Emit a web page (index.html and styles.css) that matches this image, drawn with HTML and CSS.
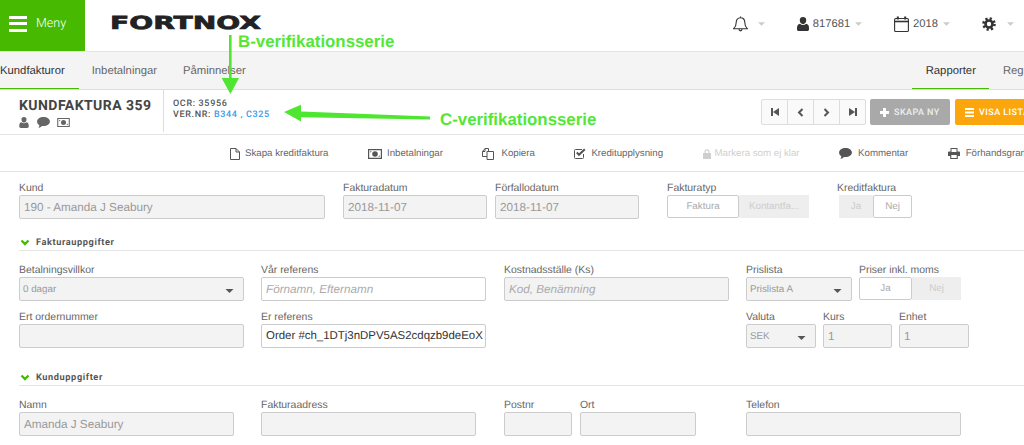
FILE: index.html
```html
<!DOCTYPE html>
<html lang="sv">
<head>
<meta charset="utf-8">
<title>Kundfaktura 359</title>
<link rel="stylesheet" href="styles.css">
</head>
<body>
<svg class="defs" width="0" height="0">
  <symbol id="i-user" viewBox="0 0 12 14"><path d="M6 0a3.3 3.3 0 0 1 3.2 3.6c0 2-1.4 3.6-3.2 3.6S2.800 5.600 2.800 3.600A3.300 3.300 0 0 1 6 0zM3 6.800c.8.8 1.800 1.200 3 1.200s2.200-.4 3-1.200c2 .3 3 1.700 3 4v1.400c0 1-.7 1.800-1.700 1.800H1.700C.7 14 0 13.200 0 12.200v-1.400c0-2.300 1-3.700 3-4z"/></symbol>
  <symbol id="i-comment" viewBox="0 0 14 12"><path d="M7 0c3.900 0 7 2.100 7 4.900s-3.100 4.900-7 4.900c-.6 0-1.100 0-1.600-.1C4.300 10.800 2.900 11.600 1.400 12c.6-.9 1-1.800 1.100-3C1 8.100 0 6.600 0 4.900 0 2.100 3.100 0 7 0z"/></symbol>
  <symbol id="i-money" viewBox="0 0 14 10"><path fill-rule="evenodd" d="M0 0h14v10H0zM1.200 1.200v7.600h11.600V1.200zM7 2.200a2.800 2.800 0 1 1 0 5.600 2.800 2.800 0 0 1 0-5.600zM2.200 2.200h1.600L2.200 3.800zM11.800 7.800h-1.600l1.600-1.600z"/></symbol>
  <symbol id="i-caret" viewBox="0 0 10 5"><path d="M0 0h10L5 5z"/></symbol>
  <symbol id="i-chev" viewBox="0 0 10 7"><path d="M1.500 1.500 5 5l3.500-3.500" fill="none" stroke="#46b900" stroke-width="2.400"/></symbol>
</svg>

<header class="topbar">
  <a class="menu-btn">
    <span class="burger"><i></i><i></i><i></i></span>
    <span>Meny</span>
  </a>
  <svg class="logo" width="152" height="16" viewBox="0 0 152 16"><text x="0" y="14" textLength="151" lengthAdjust="spacingAndGlyphs">FORTNOX</text></svg>
  <div class="top-tools">
    <div class="tool tool-bell">
      <svg width="15" height="16" viewBox="0 0 15 16" fill="none" stroke="#333" stroke-width="1.100"><path d="M7.500 1.800c-2.700 0-4.300 2-4.300 4.600 0 3.400-.9 4.800-2.500 6.300h13.600c-1.600-1.500-2.500-2.900-2.500-6.300 0-2.600-1.600-4.600-4.300-4.600zM6 13c0 1 .6 1.900 1.500 1.900S9 14 9 13M7.500 1.800V.6"/></svg>
      <svg class="caret" width="7" height="4"><use href="#i-caret"/></svg>
    </div>
    <div class="tool tool-user">
      <svg class="dark" width="12" height="14"><use href="#i-user"/></svg>
      <span>817681</span>
      <svg class="caret" width="7" height="4"><use href="#i-caret"/></svg>
    </div>
    <div class="tool tool-year">
      <svg width="15" height="16" viewBox="0 0 15 16" fill="none" stroke="#333" stroke-width="1.100"><rect x=".6" y="2.500" width="13.800" height="13" rx="1"/><path d="M.6 5.500h13.800" stroke-width="1.600"/><path d="M3.800.5v3M11.200.5v3" stroke-width="2"/></svg>
      <span>2018</span>
      <svg class="caret" width="7" height="4"><use href="#i-caret"/></svg>
    </div>
    <div class="tool">
      <svg width="14" height="14" viewBox="0 0 14 14" fill="none" stroke="#333"><circle cx="7" cy="7" r="3.500" stroke-width="2.600"/><circle cx="7" cy="7" r="5.500" stroke-width="2.600" stroke-dasharray="2.200 2.120"/></svg>
      <svg class="caret" width="7" height="4"><use href="#i-caret"/></svg>
    </div>
  </div>
</header>

<nav class="subnav">
  <div class="tabs">
    <a class="tab tab-active tab-first">Kundfakturor</a>
    <a class="tab">Inbetalningar</a>
    <a class="tab">Påminnelser</a>
  </div>
  <div class="tabs tabs-right">
    <a class="tab tab-active">Rapporter</a>
    <a class="tab">Register</a>
  </div>
</nav>

<section class="titlebar">
  <div class="title-block">
    <h1>KUNDFAKTURA 359</h1>
    <div class="title-icons">
      <svg width="10" height="11"><use href="#i-user"/></svg>
      <svg width="13" height="11"><use href="#i-comment"/></svg>
      <svg width="13" height="9"><use href="#i-money"/></svg>
    </div>
  </div>
  <div class="meta">
    <div>OCR: 35956</div>
    <div>VER.NR: <a>B344 , C325</a></div>
  </div>
  <div class="title-actions">
    <div class="pager">
      <span class="pg"><svg width="8" height="8" viewBox="0 0 8 8"><path d="M0 0h2v8H0zM8 0v8L2 4z"/></svg></span>
      <span class="pg"><svg width="7" height="9" viewBox="0 0 7 9"><path d="M5.500 1 2 4.500 5.500 8" fill="none" stroke="#555" stroke-width="2"/></svg></span>
      <span class="pg"><svg width="7" height="9" viewBox="0 0 7 9"><path d="M1.500 1 5 4.500 1.500 8" fill="none" stroke="#555" stroke-width="2"/></svg></span>
      <span class="pg"><svg width="8" height="8" viewBox="0 0 8 8"><path d="M8 0H6v8h2zM0 0v8l6-4z"/></svg></span>
    </div>
    <a class="btn btn-gray"><svg width="9" height="9" viewBox="0 0 9 9"><path d="M3 0h3v3h3v3H6v3H3V6H0V3h3z"/></svg>SKAPA NY</a>
    <a class="btn btn-orange"><svg width="9" height="9" viewBox="0 0 9 9"><path d="M0 0h9v2H0zM0 3.500h9v2H0zM0 7h9v2H0z"/></svg>VISA LISTA</a>
  </div>
</section>

<div class="actions">
  <a class="action">
    <svg width="10" height="12" viewBox="0 0 10 12" fill="none" stroke="#555"><path d="M.5.5h5.500l3.500 3.500v7.500h-9zM6 .5V4h3.500"/></svg>Skapa kreditfaktura</a>
  <a class="action">
    <svg width="14" height="10"><use href="#i-money"/></svg>Inbetalningar</a>
  <a class="action">
    <svg width="12" height="12" viewBox="0 0 12 12" fill="none" stroke="#555"><path d="M5 8.500H.5V3.500L3 .5h3.500v2.500M5 3.500h6.500v8H5zM3 .5v3H.5"/></svg>Kopiera</a>
  <a class="action">
    <svg width="12" height="11" viewBox="0 0 12 11" fill="none" stroke="#555"><path d="M9.500 6v3.500a1 1 0 0 1-1 1h-7a1 1 0 0 1-1-1v-7a1 1 0 0 1 1-1H8"/><path d="M2.800 4.500 5 6.800 10.800 1.200" stroke-width="2"/></svg>Kreditupplysning</a>
  <a class="action action-off">
    <svg width="8" height="10" viewBox="0 0 8 10"><path d="M1.500 4V2.800a2.500 2.500 0 0 1 5 0V4H8v6H0V4zM2.700 4h2.600V2.800a1.300 1.300 0 0 0-2.600 0z"/></svg>Markera som ej klar</a>
  <a class="action">
    <svg width="13" height="11"><use href="#i-comment"/></svg>Kommentar</a>
  <a class="action">
    <svg width="12" height="11" viewBox="0 0 12 11"><path fill-rule="evenodd" d="M2.500 0h7v3.500H11a1 1 0 0 1 1 1V8H9.800v3H2.200V8H0V4.500a1 1 0 0 1 1-1h1.500zM3.500 1v3h5V1zM3.300 7v3h5.400V7z"/></svg>Förhandsgranska</a>
</div>

<main class="form">
  <div class="row row-1">
    <div class="field w-kund"><label>Kund</label><div class="input off">190 - Amanda J Seabury</div></div>
    <div class="field w-date"><label>Fakturadatum</label><div class="input off">2018-11-07</div></div>
    <div class="field w-date2"><label>Förfallodatum</label><div class="input off">2018-11-07</div></div>
    <div class="field w-ftyp"><label>Fakturatyp</label>
      <div class="seg"><span class="seg-on s-faktura">Faktura</span><span class="seg-off s-kontant">Kontantfa...</span></div></div>
    <div class="field w-kredit"><label>Kreditfaktura</label>
      <div class="seg seg-in"><span class="seg-off s-ja">Ja</span><span class="seg-on s-nej">Nej</span></div></div>
  </div>

  <div class="section sec-1"><svg width="10" height="7"><use href="#i-chev"/></svg><span>Fakturauppgifter</span></div>

  <div class="row row-2">
    <div class="field w-bet"><label>Betalningsvillkor</label><div class="input off select small">0 dagar<svg width="9" height="4"><use href="#i-caret"/></svg></div></div>
    <div class="field w-ref"><label>Vår referens</label><div class="input on ph">Förnamn, Efternamn</div></div>
    <div class="field w-kst"><label>Kostnadsställe (Ks)</label><div class="input off ph">Kod, Benämning</div></div>
    <div class="field w-pris"><label>Prislista</label><div class="input off select small">Prislista A<svg width="9" height="4"><use href="#i-caret"/></svg></div></div>
    <div class="field w-moms"><label>Priser inkl. moms</label>
      <div class="seg"><span class="seg-on s-ja2">Ja</span><span class="seg-off s-nej2">Nej</span></div></div>
  </div>

  <div class="row row-3">
    <div class="field w-bet"><label>Ert ordernummer</label><div class="input off"></div></div>
    <div class="field w-er"><label>Er referens</label><div class="input on dark-text">Order #ch_1DTj3nDPV5AS2cdqzb9deEoX</div></div>
    <div class="field w-val"><label>Valuta</label><div class="input off select small">SEK<svg width="9" height="4"><use href="#i-caret"/></svg></div></div>
    <div class="field w-kurs"><label>Kurs</label><div class="input off">1</div></div>
    <div class="field w-kurs2"><label>Enhet</label><div class="input off">1</div></div>
  </div>

  <div class="section sec-2"><svg width="10" height="7"><use href="#i-chev"/></svg><span>Kunduppgifter</span></div>

  <div class="row row-4">
    <div class="field w-namn"><label>Namn</label><div class="input off">Amanda J Seabury</div></div>
    <div class="field w-adr"><label>Fakturaadress</label><div class="input off"></div></div>
    <div class="field w-post"><label>Postnr</label><div class="input off"></div></div>
    <div class="field w-ort"><label>Ort</label><div class="input off"></div></div>
    <div class="field w-tel"><label>Telefon</label><div class="input off"></div></div>
  </div>
</main>

<svg class="arrows" width="1024" height="445" viewBox="0 0 1024 445">
  <path d="M229 35h2.600v43h7.400l-8.600 16-8.800-16h7.400z"/>
  <path d="M284 112 301 104.800v6.600L430 116.600v2.800L301 117.200v4.400z"/>
</svg>
<div class="note note-b">B-verifikationsserie</div>
<div class="note note-c">C-verifikationsserie</div>
</body>
</html>
```
FILE: styles.css
```css
* { box-sizing: border-box; }
html, body { margin: 0; padding: 0; width: 1024px; height: 445px; overflow: hidden; }
body { position: relative; background: #fff; font-family: "Liberation Sans", Arial, sans-serif; color: #666; text-rendering: geometricPrecision; }
.defs { position: absolute; }
a { text-decoration: none; }

/* top bar */
.topbar { height: 52px; display: flex; align-items: flex-start; border-bottom: 1px solid #e4e4e4; }
.menu-btn { width: 85px; height: 51px; background: #46b900; color: #fff; display: flex; align-items: center; padding: 0 0 4px 9px; gap: 9px; font: 300 12.500px Roboto, sans-serif; }
.burger { display: flex; flex-direction: column; gap: 3.500px; width: 18px; }
.burger i { display: block; height: 3px; background: #fff; }
.logo { margin: 15px 0 0 25px; overflow: visible; }
.logo text { font: bold 18px "DejaVu Sans", sans-serif; fill: #222; stroke: #222; stroke-width: .7px; }
.top-tools { margin-left: auto; display: flex; height: 47px; align-items: center; padding-right: 10px; color: #555; font-size: 11.200px; }
.tool { display: flex; align-items: center; gap: 4px; }
.tool-bell { gap: 9px; margin-right: 32px; }
.tool-user { margin-right: 32px; }
.tool-year { margin-right: 32px; }
.tool .dark { fill: #333; }
.caret { fill: #ccc; }
.tool .caret { margin-left: 1px; }
.tool:last-child { gap: 10px; }

/* sub nav */
.subnav { height: 38px; background: #f4f4f4; border-bottom: 1px solid #ddd; display: flex; justify-content: space-between; font-size: 11.300px; overflow: hidden; }
.tabs { display: flex; }
.tabs-right { margin-right: -34px; }
.tab { display: block; height: 38px; padding: 0 13px; line-height: 39px; color: #666; }
.tab-active { color: #333; border-bottom: 2px solid #46b900; }
.tab-first { padding: 0 14px 0 0; }
.tabs-right .tab { padding: 0 13px 0 14px; }

/* title */
.titlebar { height: 45px; display: flex; align-items: flex-start; border-bottom: 1px solid #e4e4e4; }
.title-block { width: 164px; height: 42px; padding: 8px 0 0 19px; border-right: 1px solid #ddd; }
h1 { margin: 0; font: 700 14px/17px Roboto, sans-serif; color: #444; letter-spacing: .45px; white-space: nowrap; }
.title-icons { display: flex; gap: 7.500px; margin-top: 2px; align-items: center; fill: #666; }
.meta { padding: 9px 0 0 9px; font: 500 9px/11px Roboto, sans-serif; letter-spacing: .65px; color: #555; }
.meta a { color: #3a9be8; }
.title-actions { margin-left: auto; display: flex; margin-top: 9px; margin-right: -31px; gap: 4px; }
.pager { display: flex; height: 26px; width: 105px; border: 1px solid #ddd; border-radius: 2px; background: #fafafa; }
.pg { flex: 1; display: flex; align-items: center; justify-content: center; border-right: 1px solid #ddd; fill: #555; }
.pg:last-child { border-right: 0; }
.btn { height: 26px; display: flex; align-items: center; gap: 5px; color: #fff; fill: #fff; border-radius: 2px; font: 500 9px Roboto, sans-serif; letter-spacing: .45px; white-space: nowrap; padding: 1px 0 0 10px; }
.btn-gray { width: 80px; background: #a9a9a9; color: #eee; }
.btn-orange { width: 100px; background: #fca60d; margin-left: 1px; }

/* action bar */
.actions { height: 37px; padding: 1px 0 0 230px; display: flex; align-items: center; gap: 39.500px; border-bottom: 1px solid #e4e4e4; font-size: 9.700px; white-space: nowrap; }
.action { display: flex; align-items: center; gap: 5px; color: #666; fill: #555; }
.action:nth-child(3) { gap: 7px; }
.action:nth-child(6), .action:nth-child(7) { gap: 6px; }
.action-off { color: #cfcfcf; fill: #cfcfcf; gap: 4px; }

/* form */
.form { padding: 0 0 0 19px; width: 1100px; }
.row { display: flex; align-items: flex-start; }
.row-1 { margin-top: 9px; }
.row-2 { margin-top: 12px; }
.row-3 { margin-top: 9px; }
.row-4 { margin-top: 12px; }
.field { flex: none; }
label { display: block; font-size: 10.450px; line-height: 15px; color: #666; height: 14px; white-space: nowrap; }
.input { height: 24px; border: 1px solid #ccc; border-radius: 2px; font-size: 11.700px; line-height: 23px; padding: 0 4px; color: #999; white-space: nowrap; overflow: hidden; }
.off { background: #f3f3f3; border-bottom-width: 1.500px; }
.on { background: #fff; }
.ph { font-style: italic; color: #aaa; }
.dark-text { color: #333; padding: 0 3px 0 4px; font-size: 11.450px; }
.select { display: flex; align-items: center; justify-content: space-between; padding: 0 9px 0 3px; }
.select svg { fill: #555; margin-top: 3px; }
.small { font-size: 9.800px; }

.w-kund { width: 306px; margin-right: 18px; }
.w-date { width: 144px; margin-right: 8px; }
.w-date2 { width: 144px; margin-right: 28px; }
.w-ftyp { width: 170px; }
.w-kredit { width: 80px; }
.w-kredit .seg-in { margin-left: 2px; }
.w-bet { width: 225px; margin-right: 17px; }
.w-ref { width: 225px; margin-right: 18px; }
.w-kst { width: 225px; margin-right: 17px; }
.w-pris { width: 106px; margin-right: 7px; }
.w-moms { width: 103px; }
.w-er { width: 225px; margin-right: 260px; }
.w-val { width: 70px; margin-right: 7px; }
.w-kurs { width: 69px; margin-right: 7px; }
.w-kurs2 { width: 70px; }
.w-namn { width: 215px; margin-right: 27px; }
.w-adr { width: 215px; margin-right: 28px; }
.w-post { width: 68px; margin-right: 8px; }
.w-ort { width: 116px; margin-right: 50px; }
.w-tel { width: 215px; }

.seg { display: flex; height: 23px; font-size: 9.800px; line-height: 22px; text-align: center; }
.seg span { display: block; white-space: nowrap; overflow: hidden; }
.seg-on { background: #fff; border: 1px solid #ccc; border-radius: 2px; color: #aaa; }
.seg-off { background: #eee; color: #ccc; padding-top: 1px; }
.s-faktura { width: 72px; }
.s-kontant { width: 70px; }
.s-ja { width: 34px; }
.s-nej { width: 39px; }
.s-ja2 { width: 53px; }
.s-nej2 { width: 49px; }

.section { display: flex; align-items: center; gap: 6px; height: 15px; border-bottom: 1px solid #e4e4e4; font: 700 9.200px Roboto, sans-serif; letter-spacing: .6px; color: #555; padding: 0 0 1px 1px; }
.sec-1 { margin-top: 17px; }
.sec-2 { margin-top: 23px; }

/* annotations */
.arrows { position: absolute; left: 0; top: 0; fill: #4fe631; pointer-events: none; }
.note { position: absolute; font: bold 16.850px/20px "Liberation Sans", sans-serif; color: #55e636; white-space: nowrap; }
.note-b { left: 238px; top: 32px; }
.note-c { left: 440px; top: 110px; }
```
